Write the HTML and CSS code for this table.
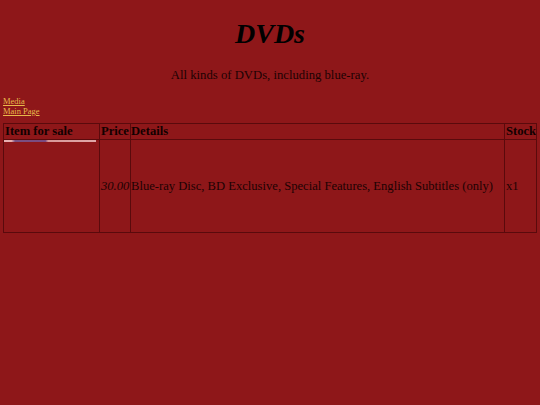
FILE: index.html
```html
<!DOCTYPE html>
<html>
<head>
<meta charset="utf-8">
<link rel="stylesheet" href="styles.css">
</head>
<body>
<h1 class="title">DVDs</h1>
<p class="intro">All kinds of DVDs, including blue-ray.</p>
<nav class="links">
<a href="#">Media</a><br>
<a href="#">Main Page</a>
</nav>
<table class="stock">
<colgroup>
<col class="w-item">
<col class="w-price">
<col>
<col class="w-stock">
</colgroup>
<tr>
<th>Item for sale</th>
<th>Price</th>
<th class="c-details">Details</th>
<th>Stock</th>
</tr>
<tr class="row">
<td class="c-item"><div class="strip"></div></td>
<td class="c-price"><em>30.00</em></td>
<td class="c-details">Blue-ray Disc, BD Exclusive, Special Features, English Subtitles (only)</td>
<td class="c-stock">x1</td>
</tr>
</table>
</body>
</html>
```
FILE: styles.css
```css
html { background: #8e1719; }
body {
  margin: 0;
  padding: 3px;
  background: #8e1719;
  font-family: "Liberation Serif", serif;
  color: #1c0203;
}
.title {
  font-size: 28px;
  font-style: italic;
  font-weight: bold;
  text-align: center;
  color: #000;
  margin: 15px 0 0;
  line-height: 32px;
}
.intro {
  text-align: center;
  font-size: 12.7px;
  margin: 18px 0 0;
  line-height: 15px;
}
.links {
  margin-top: 13px;
  font-size: 8.5px;
  line-height: 10px;
}
.links a { color: #e8b84a; }
.stock {
  margin-top: 7px;
  width: 100%;
  table-layout: fixed;
  border-collapse: collapse;
  border: 1px solid #5a0a0c;
  font-size: 12.6px;
}
.w-item { width: 96px; }
.w-price { width: 31px; }
.w-stock { width: 32px; }
.stock th, .stock td {
  border: 1px solid #5a0a0c;
  padding: 0 0 0 1px;
  white-space: nowrap;
  overflow: hidden;
}
.stock .c-details { padding-left: 0; }
.stock th {
  text-align: left;
  color: #120000;
  height: 15px;
  line-height: 15px;
}
.row td { height: 92px; vertical-align: middle; }
.row td.c-item { vertical-align: top; padding: 0; }
.strip {
  height: 2px;
  width: 92px;
  background: linear-gradient(90deg, #e8b0b0 0, #e8b0b0 8%, #7a5080 12%, #7a4a80 45%, #d89898 48%, #e0a8a8 100%);
}
```
